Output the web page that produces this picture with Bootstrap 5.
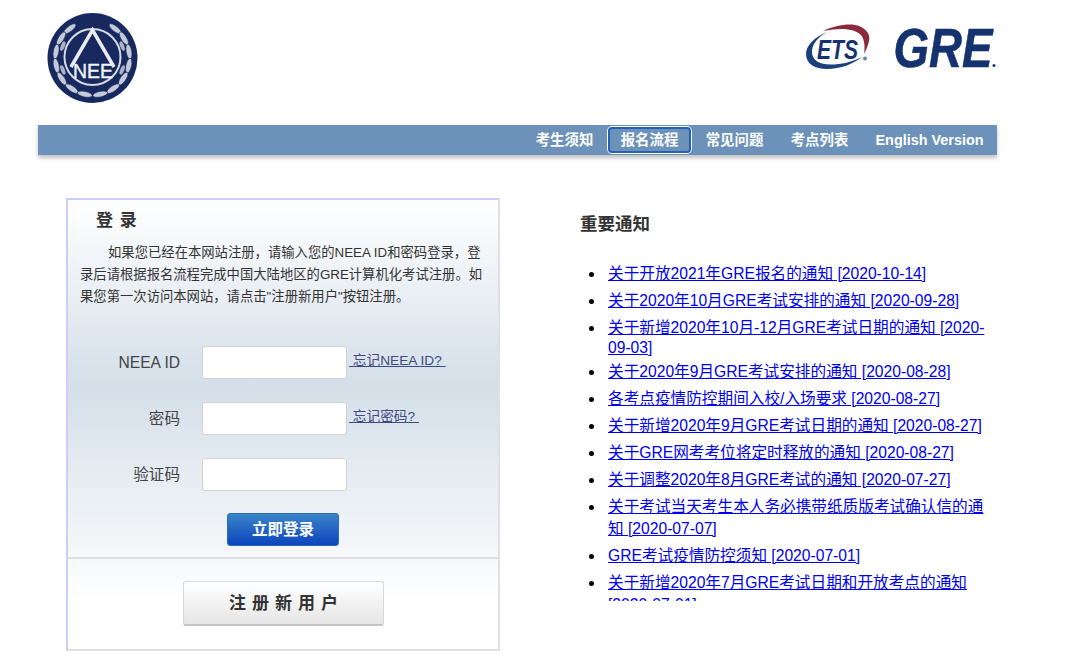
<!DOCTYPE html>
<html lang="zh-CN">
<head>
    <meta charset="UTF-8">
    <title>GRE</title>
    <link href="https://cdn.jsdelivr.net/npm/bootstrap@5.3.0/dist/css/bootstrap.min.css" rel="stylesheet">
    <style>
        body {
            background-color: #fff;
            font-family: "Liberation Sans", "Noto Sans CJK SC", sans-serif;
            color: #333;
            overflow: hidden;
        }

        .page-wrap {
            width: 959px;
            margin-left: 38px;
        }

        .top-head {
            height: 125px;
            padding: 12px 0 0 8px;
        }

        .logo-right {
            margin-right: -23px;
        }

        .main-bar {
            height: 30px;
            background-color: #6c92b9;
            box-shadow: 0 3px 4px rgba(0,0,0,0.25);
        }

        .main-bar a {
            display: block;
            width: 85px;
            height: 30px;
            line-height: 30px;
            text-align: center;
            color: #fff;
            font-size: 14.4px;
            font-weight: bold;
            text-decoration: none;
        }

        .main-bar a.on {
            height: 28px;
            margin-top: 1px;
            line-height: 28px;
            border-radius: 5px;
            box-shadow: inset 0 0 0 1px #fff, inset 0 0 0 3px #2462b8;
        }

        .main-bar a.wide {
            width: 135px;
        }

        .content-row {
            padding-top: 43px;
        }

        .login-box {
            width: 434px;
            height: 453px;
            margin-left: 28px;
            border: 2px solid #dfdfe4;
            border-left-color: #ccccfa;
            border-top-color: #ccccfa;
            background: linear-gradient(#fff 0, #d4dfe9 185px, #f6f8fa 357px, #fff 400px);
        }

        .login-title {
            font-size: 17px;
            font-weight: bold;
            letter-spacing: 1px;
            padding: 9px 0 0 28px;
            line-height: 24px;
            color: #333;
        }

        .login-text {
            font-size: 13.33px;
            line-height: 22px;
            text-indent: 28px;
            margin: 9px 0 0;
            padding: 0 12px;
            color: #333;
        }

        .form-line {
            height: 33px;
            margin-bottom: 23px;
        }

        .form-line label {
            width: 112px;
            text-align: right;
            font-size: 15.6px;
            color: #444;
        }

        .form-line input {
            width: 145px;
            height: 33px;
            margin-left: 22px;
            border: 1px solid #d2d2d2;
            border-radius: 3px;
            background-color: #fff;
        }

        .form-line a {
            font-size: 13.7px;
            color: #3d4a80;
            margin-left: 2px;
            margin-bottom: 3px;
            white-space: pre;
        }

        .form-block {
            padding-top: 38px;
        }

        .btn-login {
            display: block;
            width: 112px;
            height: 33px;
            margin: -1px 0 0 159px;
            padding: 1px 0 0;
            border: 1px solid #2a6cb8;
            border-radius: 3px;
            background: linear-gradient(#3a85c8, #0d45bd);
            color: #fff;
            font-size: 15.5px;
            font-weight: bold;
        }

        .reg-area {
            margin-top: 11px;
            border-top: 2px solid #dcdfe4;
            padding-top: 22px;
        }

        .btn-reg {
            display: block;
            width: 201px;
            height: 45px;
            margin-left: 115px;
            padding: 2px 0 0 6px;
            border: 1px solid #d8d8d8;
            border-bottom: 2px solid #c4c4c4;
            border-radius: 3px;
            background: linear-gradient(#fff, #e6e6e6);
            color: #333;
            font-size: 17px;
            font-weight: bold;
            letter-spacing: 6px;
        }

        .notice-col {
            margin-left: 80px;
            width: 410px;
        }

        .notice-title {
            font-size: 17.5px;
            font-weight: bold;
            line-height: 24px;
            margin: 14px 0 0;
            color: #333;
        }

        .notice-list {
            height: 338px;
            overflow: hidden;
            margin: 27px 0 0;
            padding: 0 0 0 28px;
            font-size: 15.65px;
            line-height: 22px;
            color: #000;
            list-style: none;
        }

        .notice-list li {
            position: relative;
            margin-bottom: 5px;
        }

        .notice-list li::before {
            content: "";
            position: absolute;
            left: -19px;
            top: 9px;
            width: 5px;
            height: 5px;
            border-radius: 50%;
            background-color: #000;
        }

        /* second line is latin only, so it sits tighter in the original */
        .notice-list li.tight-item {
            line-height: 20px;
            padding-top: 1px;
            margin-bottom: 3px;
        }

        .notice-list a {
            color: #0000ee;
        }
    </style>
</head>
<body>

<div class="page-wrap">
    <div class="top-head d-flex justify-content-between">
        <svg width="94" height="94" viewBox="0 0 94 94">
            <defs>
                <ellipse id="leaf" cx="46.5" cy="9" rx="7.5" ry="2.8" fill="#c4cad8" stroke="#17295f" stroke-width=".6"/>
                <ellipse id="leaf2" cx="46.5" cy="14" rx="5" ry="2" fill="#aab2c6"/>
            </defs>
            <circle cx="46.5" cy="46" r="45" fill="#17295f"/>
            <use href="#leaf" transform="rotate(-38 46.500 46)"/>
            <use href="#leaf" transform="rotate(-58 46.500 46)"/>
            <use href="#leaf" transform="rotate(-80 46.500 46)"/>
            <use href="#leaf" transform="rotate(-102 46.500 46)"/>
            <use href="#leaf" transform="rotate(-124 46.500 46)"/>
            <use href="#leaf" transform="rotate(-146 46.500 46)"/>
            <use href="#leaf" transform="rotate(-168 46.500 46)"/>
            <use href="#leaf" transform="rotate(38 46.500 46)"/>
            <use href="#leaf" transform="rotate(58 46.500 46)"/>
            <use href="#leaf" transform="rotate(80 46.500 46)"/>
            <use href="#leaf" transform="rotate(102 46.500 46)"/>
            <use href="#leaf" transform="rotate(124 46.500 46)"/>
            <use href="#leaf" transform="rotate(146 46.500 46)"/>
            <use href="#leaf" transform="rotate(168 46.500 46)"/>
            <use href="#leaf2" transform="rotate(-68 46.500 46)"/>
            <use href="#leaf2" transform="rotate(-112 46.500 46)"/>
            <use href="#leaf2" transform="rotate(68 46.500 46)"/>
            <use href="#leaf2" transform="rotate(112 46.500 46)"/>
            <circle cx="46.5" cy="45" r="28" fill="#17295f" stroke="#d5d9e2" stroke-width="2"/>
            <path d="M25 55 46.5 18 68 55" fill="none" stroke="#e9ebf1" stroke-width="3.500"/>
            <text x="27" y="66" font-family="Liberation Sans" font-size="21" fill="#f2f3f7" stroke="#f2f3f7" stroke-width=".4" textLength="40" lengthAdjust="spacingAndGlyphs">NEE</text>
        </svg>
        <svg width="215" height="60" viewBox="0 0 215 60" class="mt-2 logo-right">
            <path d="M18 11C28 6 42 3.500 50 5 60 6.500 66 14 64 21 63 26 61 30 59 34 60 28 60 20 56 15 50 9 38 7 18 11Z" fill="#8b2a3f"/>
            <path d="M22 12C10 17 1 25 1 34 1 44 10 49 22 49 36 49 48 44 57 37 47 42 36 44.500 26 44.500 14 44.500 7 40 7 32 7 24 13 17 22 12Z" fill="#1d3f7c"/>
            <text x="12" y="39" font-family="Liberation Sans" font-weight="bold" font-style="italic" font-size="27" fill="#14326e" textLength="41" lengthAdjust="spacingAndGlyphs">ETS</text>
            <circle cx="60" cy="38.500" r="2" fill="#6a84b0"/>
            <text x="88.500" y="47" font-family="Liberation Sans" font-weight="bold" font-style="italic" font-size="56" fill="#14326e" stroke="#14326e" stroke-width=".6" textLength="99" lengthAdjust="spacingAndGlyphs">GRE</text>
            <circle cx="189" cy="45.500" r="1.500" fill="#14326e"/>
        </svg>
    </div>

    <div class="main-bar d-flex justify-content-end">
        <a href="#">考生须知</a>
        <a href="#" class="on">报名流程</a>
        <a href="#">常见问题</a>
        <a href="#">考点列表</a>
        <a href="#" class="wide">English Version</a>
    </div>

    <div class="content-row d-flex">
        <div class="login-box">
            <div class="login-title">登 录</div>
            <p class="login-text">如果您已经在本网站注册，请输入您的NEEA ID和密码登录，登录后请根据报名流程完成中国大陆地区的GRE计算机化考试注册。如果您第一次访问本网站，请点击"注册新用户"按钮注册。</p>
            <form class="form-block">
                <div class="form-line d-flex align-items-center">
                    <label>NEEA ID</label>
                    <input type="text">
                    <a href="#"> 忘记NEEA ID? </a>
                </div>
                <div class="form-line d-flex align-items-center">
                    <label>密码</label>
                    <input type="password">
                    <a href="#"> 忘记密码? </a>
                </div>
                <div class="form-line d-flex align-items-center">
                    <label>验证码</label>
                    <input type="text">
                </div>
                <button type="button" class="btn-login">立即登录</button>
            </form>
            <div class="reg-area">
                <button type="button" class="btn-reg">注册新用户</button>
            </div>
        </div>

        <div class="notice-col">
            <h5 class="notice-title">重要通知</h5>
            <ul class="notice-list">
                <li><a href="#">关于开放2021年GRE报名的通知 [2020-10-14]</a></li>
                <li><a href="#">关于2020年10月GRE考试安排的通知 [2020-09-28]</a></li>
                <li class="tight-item"><a href="#">关于新增2020年10月-12月GRE考试日期的通知 [2020-09-03]</a></li>
                <li><a href="#">关于2020年9月GRE考试安排的通知 [2020-08-28]</a></li>
                <li><a href="#">各考点疫情防控期间入校/入场要求 [2020-08-27]</a></li>
                <li><a href="#">关于新增2020年9月GRE考试日期的通知 [2020-08-27]</a></li>
                <li><a href="#">关于GRE网考考位将定时释放的通知 [2020-08-27]</a></li>
                <li><a href="#">关于调整2020年8月GRE考试的通知 [2020-07-27]</a></li>
                <li><a href="#">关于考试当天考生本人务必携带纸质版考试确认信的通知 [2020-07-07]</a></li>
                <li><a href="#">GRE考试疫情防控须知 [2020-07-01]</a></li>
                <li><a href="#">关于新增2020年7月GRE考试日期和开放考点的通知 [2020-07-01]</a></li>
            </ul>
        </div>
    </div>
</div>

<script src="https://cdn.jsdelivr.net/npm/bootstrap@5.3.0/dist/js/bootstrap.bundle.min.js"></script>
</body>
</html>
